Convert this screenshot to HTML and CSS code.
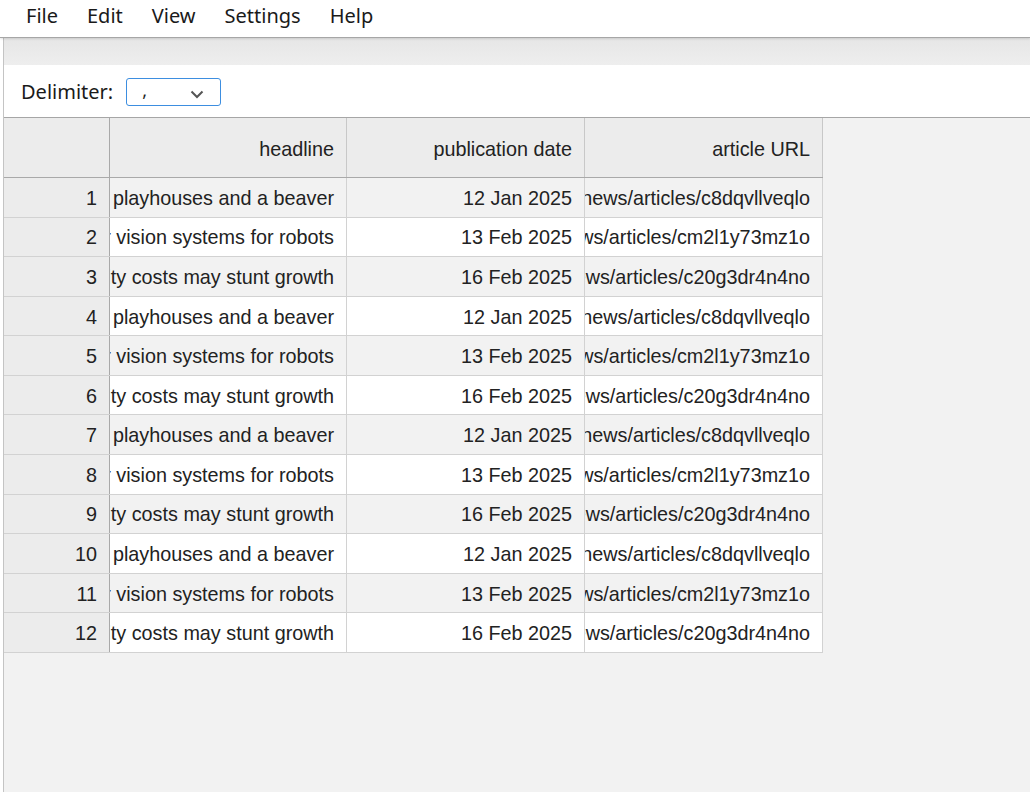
FILE: index.html
```html
<!DOCTYPE html>
<html>
<head>
<meta charset="utf-8">
<link rel="stylesheet" href="styles.css">
</head>
<body>
<div class="app">
  <div class="menubar">
    <span class="menu-item">File</span>
    <span class="menu-item">Edit</span>
    <span class="menu-item">View</span>
    <span class="menu-item">Settings</span>
    <span class="menu-item">Help</span>
  </div>
  <div class="toolstrip"></div>
  <div class="optionsbar">
    <span class="opt-label">Delimiter:</span>
    <div class="select">
      <span class="select-value">,</span>
      <svg class="chevron" width="14" height="9" viewBox="0 0 14 9"><path d="M1.5 1.5 L7 7 L12.5 1.5" fill="none" stroke="#555" stroke-width="2"/></svg>
    </div>
  </div>
  <div class="gridarea">
    <div class="grid">
      <div class="row head">
        <div class="cell rh"></div>
        <div class="cell"><span>headline</span></div>
        <div class="cell"><span>publication date</span></div>
        <div class="cell"><span>article URL</span></div>
      </div>
      <div class="row odd"><div class="cell rh"><span>1</span></div><div class="cell"><span>e playhouses and a beaver</span></div><div class="cell"><span>12 Jan 2025</span></div><div class="cell"><span>/news/articles/c8dqvllveqlo</span></div></div>
      <div class="row even"><div class="cell rh"><span>2</span></div><div class="cell"><span>r vision systems for robots</span></div><div class="cell"><span>13 Feb 2025</span></div><div class="cell"><span>news/articles/cm2l1y73mz1o</span></div></div>
      <div class="row odd"><div class="cell rh"><span>3</span></div><div class="cell"><span>city costs may stunt growth</span></div><div class="cell"><span>16 Feb 2025</span></div><div class="cell"><span>news/articles/c20g3dr4n4no</span></div></div>
      <div class="row even"><div class="cell rh"><span>4</span></div><div class="cell"><span>e playhouses and a beaver</span></div><div class="cell"><span>12 Jan 2025</span></div><div class="cell"><span>/news/articles/c8dqvllveqlo</span></div></div>
      <div class="row odd"><div class="cell rh"><span>5</span></div><div class="cell"><span>r vision systems for robots</span></div><div class="cell"><span>13 Feb 2025</span></div><div class="cell"><span>news/articles/cm2l1y73mz1o</span></div></div>
      <div class="row even"><div class="cell rh"><span>6</span></div><div class="cell"><span>city costs may stunt growth</span></div><div class="cell"><span>16 Feb 2025</span></div><div class="cell"><span>news/articles/c20g3dr4n4no</span></div></div>
      <div class="row odd"><div class="cell rh"><span>7</span></div><div class="cell"><span>e playhouses and a beaver</span></div><div class="cell"><span>12 Jan 2025</span></div><div class="cell"><span>/news/articles/c8dqvllveqlo</span></div></div>
      <div class="row even"><div class="cell rh"><span>8</span></div><div class="cell"><span>r vision systems for robots</span></div><div class="cell"><span>13 Feb 2025</span></div><div class="cell"><span>news/articles/cm2l1y73mz1o</span></div></div>
      <div class="row odd"><div class="cell rh"><span>9</span></div><div class="cell"><span>city costs may stunt growth</span></div><div class="cell"><span>16 Feb 2025</span></div><div class="cell"><span>news/articles/c20g3dr4n4no</span></div></div>
      <div class="row even"><div class="cell rh"><span>10</span></div><div class="cell"><span>e playhouses and a beaver</span></div><div class="cell"><span>12 Jan 2025</span></div><div class="cell"><span>/news/articles/c8dqvllveqlo</span></div></div>
      <div class="row odd"><div class="cell rh"><span>11</span></div><div class="cell"><span>r vision systems for robots</span></div><div class="cell"><span>13 Feb 2025</span></div><div class="cell"><span>news/articles/cm2l1y73mz1o</span></div></div>
      <div class="row even"><div class="cell rh"><span>12</span></div><div class="cell"><span>city costs may stunt growth</span></div><div class="cell"><span>16 Feb 2025</span></div><div class="cell"><span>news/articles/c20g3dr4n4no</span></div></div>
    </div>
  </div>
</div>
</body>
</html>
```

FILE: styles.css
```css
html, body {
  margin: 0;
  padding: 0;
  height: 100%;
  overflow: hidden;
  background: #ffffff;
}

.app {
  display: flex;
  flex-direction: column;
  height: 792px;
  margin-left: 3px;
  border-left: 1px solid #c4c4c4;
  font-family: "Noto Sans", "Open Sans", sans-serif;
}

.menubar {
  height: 38px;
  display: flex;
  align-items: center;
  padding-left: 26px;
  padding-bottom: 6px;
  box-sizing: border-box;
  margin-left: -4px;
  background: #ffffff;
  border-bottom: 1px solid #a6a6a6;
  box-shadow: 0 1px 2px rgba(0,0,0,0.12);
  position: relative;
  z-index: 1;
  color: #1a1a1a;
  font-size: 20px;
  flex-shrink: 0;
}

.menu-item {
  margin-right: 29px;
  line-height: 1;
}

.toolstrip {
  height: 27px;
  flex-shrink: 0;
  background: linear-gradient(#e6e6e6, #eeeeee);
}

.optionsbar {
  height: 53px;
  flex-shrink: 0;
  display: flex;
  align-items: center;
  padding-left: 17px;
  padding-top: 1px;
  box-sizing: border-box;
  background: #ffffff;
  border-bottom: 1px solid #a6a6a6;
}

.opt-label {
  font-size: 20px;
  color: #1a1a1a;
  margin-right: 13px;
}

.select {
  width: 95px;
  height: 28px;
  box-sizing: border-box;
  border: 1px solid #3d8ee0;
  border-radius: 3px;
  display: flex;
  align-items: center;
  justify-content: space-between;
  padding: 0 16px 0 15px;
}

.select-value {
  font-size: 18px;
  color: #222;
  line-height: 1;
  margin-top: -4px;
}

.chevron {
  margin-top: 5px;
}

.gridarea {
  flex: 1;
  background: #f2f2f2;
  overflow: hidden;
}

.grid {
  display: flex;
  flex-direction: column;
  width: 819px;
  font-family: "Liberation Sans", Arial, sans-serif;
  font-size: 19.8px;
  color: #222222;
}

.row {
  display: grid;
  grid-template-columns: 106px 237px 238px 238px;
  height: 39.58px;
  box-sizing: border-box;
  border-bottom: 1px solid #d2d2d2;
  flex-shrink: 0;
}

.row.head {
  height: 60px;
  background: #ececec;
  border-bottom: 1px solid #a9a9a9;
}

.row.odd { background: #f2f2f2; }
.row.even { background: #ffffff; }

.cell {
  display: flex;
  justify-content: flex-end;
  align-items: center;
  overflow: hidden;
  white-space: nowrap;
  padding-right: 12px;
  padding-top: 2px;
  border-right: 1px solid #d2d2d2;
  min-width: 0;
}

.cell span {
  flex-shrink: 0;
}

.cell.rh {
  background: #ececec;
  border-right: 1px solid #a9a9a9;
}

.head .cell {
  border-right: 1px solid #c8c8c8;
  padding-top: 4px;
}

.head .cell.rh {
  border-right: 1px solid #a9a9a9;
}
```
